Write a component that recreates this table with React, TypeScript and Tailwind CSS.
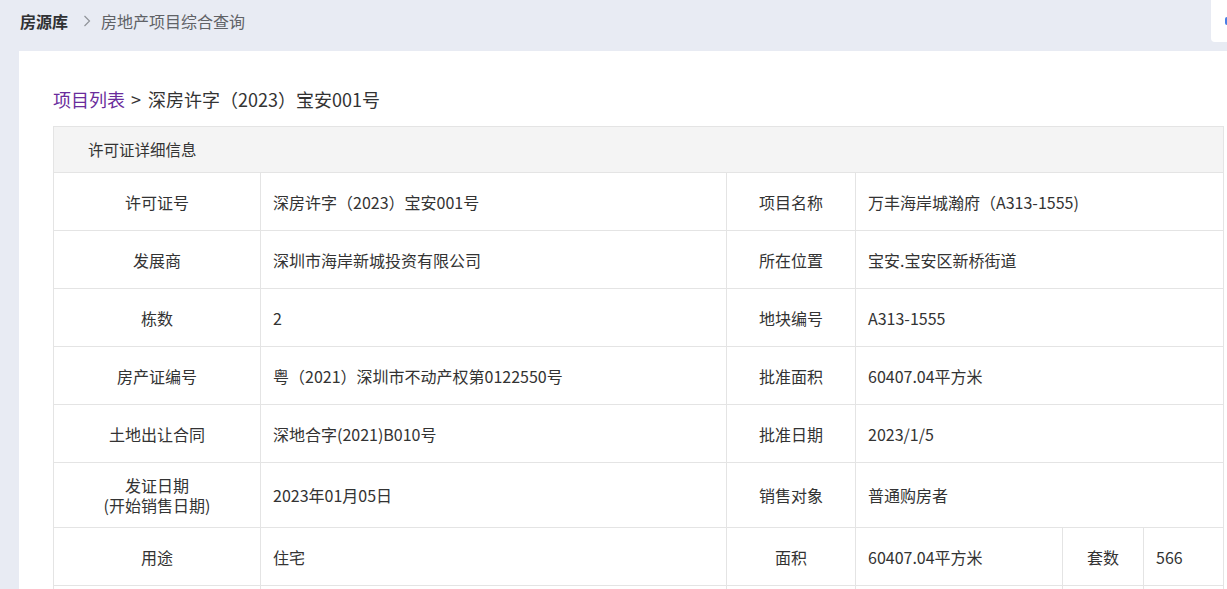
import React from "react";

const F = { fontFamily: '"Noto Sans CJK SC", "Microsoft YaHei", sans-serif' };

function Label({ children, h = "h-[58px]" }: { children: React.ReactNode; h?: string }) {
  return (
    <td className={`${h} border border-[#e4e4e4] text-center align-middle text-[#333] px-2`}>{children}</td>
  );
}
function Val({ children, span = 1 }: { children: React.ReactNode; span?: number }) {
  return (
    <td colSpan={span} className="border border-[#e4e4e4] align-middle text-[#333] pl-[12px] pr-2">
      {children}
    </td>
  );
}

export default function App() {
  return (
    <div className="w-[1227px] h-[589px] overflow-hidden bg-[#e8ebf3] text-[16px]" style={F}>
      <div className="h-[51px] flex items-start justify-between">
        <div className="flex items-center h-[42px] pl-[20px]">
          <span className="font-bold text-[#303133]">房源库</span>
          <svg className="ml-[15px]" width="8" height="12" viewBox="0 0 8 12" fill="none">
            <path d="M1.5 1 L6.5 6 L1.5 11" stroke="#909399" strokeWidth="1.2" />
          </svg>
          <span className="ml-[10px] text-[#606266]">房地产项目综合查询</span>
        </div>
        <div className="w-[16px] h-[42px] bg-white rounded-bl-[4px] flex items-center justify-end">
          <div className="w-[2px] h-[8px] bg-[#4a7fe6] rounded-l-full" />
        </div>
      </div>
      <div className="ml-[19px] bg-white h-[538px] pl-[34px] pt-[35px]">
        <div className="text-[18px] leading-[26px] text-[#333] mb-[14px] h-[26px] flex items-center">
          <span className="text-[#6a2c9c]">项目列表</span>
          <span className="ml-[6px]">&gt;</span>
          <span className="ml-[7px]">深房许字（2023）宝安001号</span>
        </div>
        <table className="w-[1170px] border-collapse table-fixed">
          <colgroup>
            <col className="w-[207px]" />
            <col className="w-[466px]" />
            <col className="w-[129px]" />
            <col className="w-[207px]" />
            <col className="w-[81px]" />
            <col className="w-[80px]" />
          </colgroup>
          <tbody>
            <tr>
              <td colSpan={6} className="h-[46px] bg-[#f4f4f4] border border-[#e4e4e4] pl-[34px] text-[#333] text-[15.5px]">
                许可证详细信息
              </td>
            </tr>
            <tr>
              <Label>许可证号</Label>
              <Val>深房许字（2023）宝安001号</Val>
              <Label>项目名称</Label>
              <Val span={3}>万丰海岸城瀚府（A313-1555)</Val>
            </tr>
            <tr>
              <Label>发展商</Label>
              <Val>深圳市海岸新城投资有限公司</Val>
              <Label>所在位置</Label>
              <Val span={3}>宝安.宝安区新桥街道</Val>
            </tr>
            <tr>
              <Label>栋数</Label>
              <Val>2</Val>
              <Label>地块编号</Label>
              <Val span={3}>A313-1555</Val>
            </tr>
            <tr>
              <Label>房产证编号</Label>
              <Val>粤（2021）深圳市不动产权第0122550号</Val>
              <Label>批准面积</Label>
              <Val span={3}>60407.04平方米</Val>
            </tr>
            <tr>
              <Label>土地出让合同</Label>
              <Val>深地合字(2021)B010号</Val>
              <Label>批准日期</Label>
              <Val span={3}>2023/1/5</Val>
            </tr>
            <tr>
              <Label h="h-[65px]">
                <div className="leading-[20px]">
                  发证日期
                  <br />
                  (开始销售日期)
                </div>
              </Label>
              <Val>2023年01月05日</Val>
              <Label h="h-[65px]">销售对象</Label>
              <Val span={3}>普通购房者</Val>
            </tr>
            <tr>
              <Label>用途</Label>
              <Val>住宅</Val>
              <Label>面积</Label>
              <Val>60407.04平方米</Val>
              <Label>套数</Label>
              <Val>566</Val>
            </tr>
            <tr>
              <Label>&nbsp;</Label>
              <Val>&nbsp;</Val>
              <Label>&nbsp;</Label>
              <Val>&nbsp;</Val>
              <Label>&nbsp;</Label>
              <Val>&nbsp;</Val>
            </tr>
          </tbody>
        </table>
      </div>
    </div>
  );
}
